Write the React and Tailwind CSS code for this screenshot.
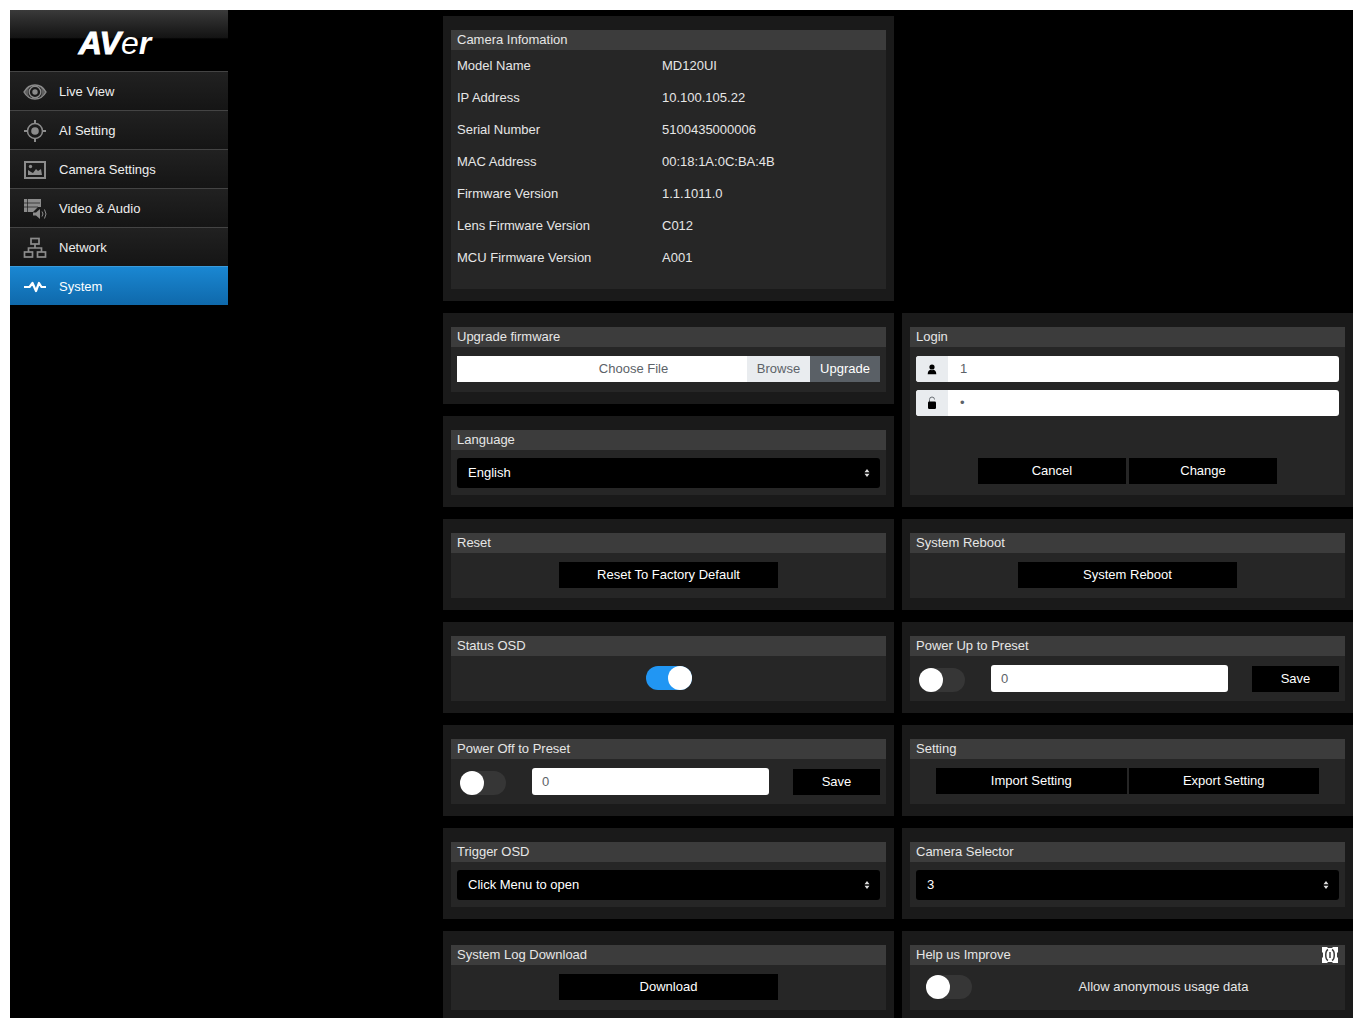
import { useState } from "react";

const NAV_ITEMS = [
  { label: "Live View", icon: EyeIcon },
  { label: "AI Setting", icon: TargetIcon },
  { label: "Camera Settings", icon: PictureIcon },
  { label: "Video & Audio", icon: VideoIcon },
  { label: "Network", icon: NetworkIcon },
  { label: "System", icon: PulseIcon, active: true },
];

const CAMERA_INFO = [
  ["Model Name", "MD120UI"],
  ["IP Address", "10.100.105.22"],
  ["Serial Number", "5100435000006"],
  ["MAC Address", "00:18:1A:0C:BA:4B"],
  ["Firmware Version", "1.1.1011.0"],
  ["Lens Firmware Version", "C012"],
  ["MCU Firmware Version", "A001"],
];

/* ---------- Icons ---------- */

function EyeIcon() {
  return (
    <svg viewBox="0 0 24 24" className="w-6 h-6" fill="none" stroke="currentColor" strokeWidth="1.4">
      <path d="M1 12C3.500 7.500 7.500 5 12 5s8.500 2.500 11 7c-2.500 4.500-6.500 7-11 7S3.500 16.500 1 12z" />
      <path d="M7 6.500C3.800 8 2 10.500 1.300 12c.7 1.500 2.500 4 5.700 5.500-2.500-3-2.500-8 0-11zM17 6.500c3.200 1.500 5 4 5.700 5.500-.7 1.500-2.500 4-5.700 5.500 2.500-3 2.500-8 0-11z" fill="currentColor" fillOpacity="0.6" stroke="none" />
      <circle cx="12" cy="12" r="5.800" />
      <circle cx="12" cy="12" r="2" fill="currentColor" />
    </svg>
  );
}

function TargetIcon() {
  return (
    <svg viewBox="0 0 24 24" className="w-6 h-6" fill="none" stroke="currentColor" strokeWidth="1.5">
      <circle cx="12" cy="12" r="7.500" />
      <circle cx="12" cy="12" r="3.800" fill="currentColor" stroke="none" />
      <path d="M12 1v4M12 19v4M1 12h4M19 12h4" strokeWidth="2" />
    </svg>
  );
}

function PictureIcon() {
  return (
    <svg viewBox="0 0 24 24" className="w-6 h-6" fill="none" stroke="currentColor" strokeWidth="2">
      <rect x="2" y="4" width="20" height="16" />
      <path d="M5 17v-5l3 2 2 1 3-4 2 2 3-2 1 6z" fill="currentColor" stroke="none" />
      <circle cx="7.500" cy="8.500" r="1.700" fill="currentColor" stroke="none" />
    </svg>
  );
}

function VideoIcon() {
  return (
    <svg viewBox="0 0 24 24" className="w-6 h-6" fill="none" stroke="currentColor">
      <path d="M1 2h17v8h-3l-5 5H1z" fill="currentColor" stroke="none" />
      <path d="M4.500 2v13M1 6h16M1 10h14" stroke="#1b1b1b" strokeWidth="0.7" />
      <path d="M10 15.500h3l4-3.500v10l-4-3.500h-3z" fill="currentColor" stroke="none" />
      <path d="M19 14.500q2 2.500 0 5M21.500 12.500q3 4.500 0 9" />
    </svg>
  );
}

function NetworkIcon() {
  return (
    <svg viewBox="0 0 24 24" className="w-6 h-6" fill="none" stroke="currentColor" strokeWidth="1.7">
      <rect x="8" y="2.500" width="8" height="5.500" />
      <rect x="1.500" y="16" width="8" height="5" />
      <rect x="14.500" y="16" width="8" height="5" />
      <path d="M12 8v4M5.500 16v-4h13v4" />
    </svg>
  );
}

function PulseIcon() {
  return (
    <svg viewBox="0 0 24 24" className="w-6 h-6" fill="none" stroke="currentColor" strokeWidth="2.200" strokeLinejoin="round">
      <path d="M1 12h5.500l3-4 3.500 8 3-8 2.500 4H23" />
    </svg>
  );
}

function UserIcon() {
  return (
    <svg viewBox="0 0 10 12" className="w-[10px] h-3" fill="currentColor">
      <circle cx="5" cy="4" r="2.600" />
      <path d="M.7 11.300c0-2.800 1.300-4.300 2.800-4.500 1 .6 2 .6 3 0 1.500.2 2.800 1.700 2.800 4.500z" />
    </svg>
  );
}

function UnlockIcon() {
  return (
    <svg viewBox="0 0 10 14" className="w-[10px] h-[14px]">
      <path d="M2.500 6V3.500a2.500 2.500 0 0 1 5 0" fill="none" stroke="#6b7075" strokeWidth="1" />
      <rect x="1" y="5.500" width="8" height="7.500" rx="1.200" fill="currentColor" />
    </svg>
  );
}

function InfoIcon() {
  return (
    <svg viewBox="0 0 18 18" className="w-[18px] h-[18px]" fill="none">
      <path d="M1 1h5l1 1h4l1-1h5v5l-1 1v4l1 1v5h-5l-1-1H7l-1 1H1v-5l1-1V7L1 6z" fill="#fff" />
      <path d="M7 3.500C4 5 4 13 7 14.500M11 3.500c3 1.500 3 9.500 0 11" stroke="#3c3c3c" strokeWidth="1.500" />
      <path d="M9 6v6" stroke="#3c3c3c" strokeWidth="1.500" />
    </svg>
  );
}

/* ---------- Controls ---------- */

function Panel({ title, action, className = "", children }) {
  return (
    <section className={`flex flex-col bg-[#1a1a1a] px-2 pt-[14px] pb-3 min-h-[91px] ${className}`}>
      <header className="flex items-center justify-between h-5 px-1.5 bg-[#3c3c3c]">
        <h2>{title}</h2>
        {action}
      </header>
      <div className="flex-1 px-1.5 bg-[#262626]">{children}</div>
    </section>
  );
}

function Button({ className = "", children }) {
  return (
    <button type="button" className={`h-[26px] bg-black text-white hover:bg-neutral-800 ${className}`}>
      {children}
    </button>
  );
}

function Toggle({ label, defaultChecked = false }) {
  return (
    <input
      type="checkbox"
      role="switch"
      aria-label={label}
      defaultChecked={defaultChecked}
      className="block appearance-none w-[46px] h-6 rounded-full bg-[#363636] checked:bg-[#2196f3] before:block before:w-6 before:h-6 before:rounded-full before:bg-white checked:before:translate-x-[22px]"
    />
  );
}

function Select({ label, options }) {
  return (
    <div className="relative mt-2">
      <select aria-label={label} className="block appearance-none w-full h-[30px] pl-[11px] rounded-[3px] bg-black text-white">
        {options.map((option) => (
          <option key={option}>{option}</option>
        ))}
      </select>
      <svg viewBox="0 0 6 8" className="absolute right-[10px] top-[11px] w-[6px] h-2 pointer-events-none" fill="#ddd">
        <path d="M3 0l2.500 3.300h-5zM3 8l2.500-3.300h-5z" />
      </svg>
    </div>
  );
}

function LoginField({ id, label, type, icon: Icon, defaultValue }) {
  return (
    <div className="flex h-[26px] rounded-[3px] overflow-hidden bg-white">
      <label htmlFor={id} aria-label={label} className="flex items-center justify-center w-8 bg-[#e9ecef] text-black">
        <Icon />
      </label>
      <input id={id} type={type} defaultValue={defaultValue} className="flex-1 min-w-0 px-3 text-[#5c6268] outline-none" />
    </div>
  );
}

function PresetRow({ label }) {
  const [preset, setPreset] = useState("0");

  return (
    <div className="flex items-end gap-6 pt-[9px]">
      <div className="flex justify-center w-[51px]">
        <Toggle label={label} />
      </div>
      <input
        type="text"
        aria-label={`${label} number`}
        value={preset}
        onChange={(e) => setPreset(e.target.value)}
        className="flex-1 min-w-0 h-[27px] px-[10px] rounded-[3px] bg-white text-[#5c6268]"
      />
      <Button className="w-[87px]">Save</Button>
    </div>
  );
}

/* ---------- Layout ---------- */

function Sidebar() {
  return (
    <aside className="w-[218px] shrink-0">
      <div className="flex items-center justify-center h-[61px] pr-2 pt-1 bg-linear-to-b from-[#3a3a3a] via-[#141414] via-45% to-black to-50% text-white text-[32px] leading-none italic font-bold">
        <span className="[-webkit-text-stroke:1px_white]">AV</span>
        <span className="font-normal">e</span>
        <span>r</span>
      </div>
      <nav>
        {NAV_ITEMS.map(({ label, icon: Icon, active }) => (
          <a
            key={label}
            href="#"
            aria-current={active ? "page" : undefined}
            className={`flex items-center gap-3 h-[39px] pl-[13px] pt-0.5 border-t bg-linear-to-b ${
              active
                ? "border-[#3a9bdc] from-[#1a87d2] to-[#0f69ab] text-white"
                : "border-[#444] from-[#212121] to-[#151515] text-[#eee]"
            }`}
          >
            <span className={active ? "text-white" : "text-[#8c8c8c]"}>
              <Icon />
            </span>
            {label}
          </a>
        ))}
      </nav>
    </aside>
  );
}

export default function App() {
  return (
    <div className="h-screen pt-[10px] pl-[10px] pr-[9px] pb-[3px] bg-white font-['Liberation_Sans',Arial,sans-serif] text-[13px] leading-5 text-[#e6e6e6]">
      <div className="flex h-full bg-black overflow-hidden">
        <Sidebar />

        <main className="flex-1 min-w-0 pl-[215px] pt-1.5 overflow-y-auto [scrollbar-width:none]">
          <div className="grid grid-cols-2 gap-x-2 gap-y-3">
            <Panel title="Camera Infomation" className="min-h-[285px]">
              <dl>
                {CAMERA_INFO.map(([name, value]) => (
                  <div key={name} className="grid grid-cols-[205px_1fr] items-center h-8">
                    <dt>{name}</dt>
                    <dd>{value}</dd>
                  </div>
                ))}
              </dl>
            </Panel>

            <Panel title="Upgrade firmware" className="col-start-1">
              <div className="flex h-[26px] mt-[9px]">
                <label className="relative flex-1 flex items-center justify-center bg-white text-[#5c6268] cursor-pointer">
                  <input type="file" className="sr-only" />
                  Choose File
                  <span className="absolute inset-y-0 right-0 flex items-center justify-center w-[63px] bg-[#e9ecef]">
                    Browse
                  </span>
                </label>
                <button type="button" className="w-[70px] bg-[#5a6066] text-white">
                  Upgrade
                </button>
              </div>
            </Panel>

            <Panel title="Login" className="row-span-2">
              <form className="flex flex-col gap-2 pt-[9px]">
                <LoginField id="user" label="User name" type="text" icon={UserIcon} defaultValue="1" />
                <LoginField id="password" label="Password" type="password" icon={UnlockIcon} defaultValue="1" />
                <div className="flex justify-center gap-[3px] pt-[34px]">
                  <Button className="w-[35%]">Cancel</Button>
                  <Button className="w-[35%]">Change</Button>
                </div>
              </form>
            </Panel>

            <Panel title="Language">
              <Select label="Language" options={["English"]} />
            </Panel>

            <Panel title="Reset">
              <div className="flex justify-center pt-[9px]">
                <Button className="w-[52%]">Reset To Factory Default</Button>
              </div>
            </Panel>

            <Panel title="System Reboot">
              <div className="flex justify-center pt-[9px]">
                <Button className="w-[52%]">System Reboot</Button>
              </div>
            </Panel>

            <Panel title="Status OSD">
              <div className="flex justify-center pt-[10px]">
                <Toggle label="Status OSD" defaultChecked />
              </div>
            </Panel>

            <Panel title="Power Up to Preset">
              <PresetRow label="Power Up to Preset" />
            </Panel>

            <Panel title="Power Off to Preset">
              <PresetRow label="Power Off to Preset" />
            </Panel>

            <Panel title="Setting">
              <div className="flex gap-0.5 pt-[9px] px-5">
                <Button className="flex-1">Import Setting</Button>
                <Button className="flex-1">Export Setting</Button>
              </div>
            </Panel>

            <Panel title="Trigger OSD">
              <Select label="Trigger OSD" options={["Click Menu to open"]} />
            </Panel>

            <Panel title="Camera Selector">
              <Select label="Camera Selector" options={["3"]} />
            </Panel>

            <Panel title="System Log Download">
              <div className="flex justify-center pt-[9px]">
                <Button className="w-[52%]">Download</Button>
              </div>
            </Panel>

            <Panel title="Help us Improve" action={<InfoIcon />}>
              <div className="flex items-center pt-[10px]">
                <div className="w-[72px] pl-[10px]">
                  <Toggle label="Allow anonymous usage data" />
                </div>
                <span className="flex-1 text-center">Allow anonymous usage data</span>
              </div>
            </Panel>
          </div>
        </main>
      </div>
    </div>
  );
}
